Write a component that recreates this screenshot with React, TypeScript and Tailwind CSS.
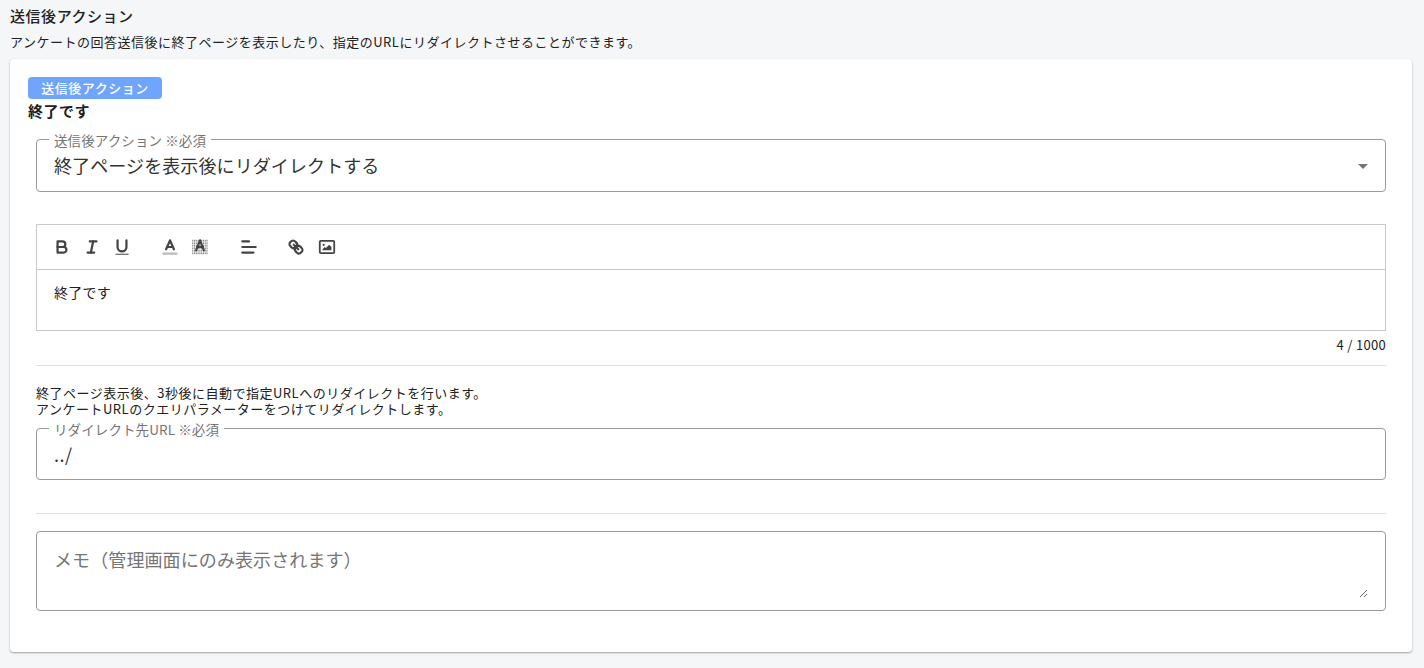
const FONT = "font-['Noto_Sans_CJK_JP','Noto_Sans',sans-serif]";

function ToolIcon({ children }: { children: React.ReactNode }) {
  return (
    <button className="w-[30px] h-6 flex items-center justify-center">
      <svg viewBox="0 0 18 18" className="w-5 h-5 fill-none stroke-[#444] stroke-2 [stroke-linecap:round] [stroke-linejoin:round]">
        {children}
      </svg>
    </button>
  );
}

function OutlinedField({ label, className, children }: { label: string; className: string; children: React.ReactNode }) {
  return (
    <div className={`relative border border-[#9a9a9a] rounded-[4px] ${className}`}>
      <span className="absolute -top-[9px] left-[12px] bg-white px-[5px] text-[13.5px] leading-[18px] tracking-[0.1px] text-[#757575]">{label}</span>
      {children}
    </div>
  );
}

export default function App() {
  return (
    <div className={`bg-[#f5f6f8] h-[668px] pl-[10px] pr-[12px] pt-[6px] text-[#212121] overflow-hidden ${FONT}`}>
      <h2 className="text-[15px] leading-[20px] tracking-[0.55px] font-medium">送信後アクション</h2>
      <p className="mt-[6px] text-[13px] leading-[20px] tracking-[0.5px]">アンケートの回答送信後に終了ページを表示したり、指定のURLにリダイレクトさせることができます。</p>

      <div className="mt-[7px] h-[593px] bg-white rounded-[4px] shadow-[0_1px_2px_rgba(0,0,0,0.35)] pt-[18px] px-[18px]">
        <div className="w-[134px] h-[22px] bg-[#70a5ff] rounded-[4px] text-white text-[13px] tracking-[0.5px] font-medium leading-[22px] text-center">送信後アクション</div>
        <div className="text-[15px] leading-[24px] tracking-[0.5px] font-bold">終了です</div>

        <div className="px-2 mt-[16px]">
          <OutlinedField label="送信後アクション ※必須" className="h-[53px] flex items-center justify-between pl-[17px] pr-[17px]">
            <span className="text-[18px] leading-[24px] tracking-[0.1px] text-[#333] mt-[-1px]">終了ページを表示後にリダイレクトする</span>
            <span className="w-0 h-0 border-x-[5.5px] border-x-transparent border-t-[5.5px] border-t-[#757575] mt-[1px]" />
          </OutlinedField>

          {/* Editor */}
          <div className="mt-[32px] border border-[#c8c8c8]">
            <div className="h-[45px] border-b border-[#c8c8c8] flex items-center pl-[10px]">
              <ToolIcon>
                <path d="M5,4H9.5A2.5,2.5,0,0,1,12,6.5v0A2.5,2.5,0,0,1,9.5,9H5A0,0,0,0,1,5,9V4A0,0,0,0,1,5,4Z" />
                <path d="M5,9h5.5A2.5,2.5,0,0,1,13,11.5v0A2.5,2.5,0,0,1,10.5,14H5a0,0,0,0,1,0,0V9A0,0,0,0,1,5,9Z" />
              </ToolIcon>
              <ToolIcon>
                <line x1="7" x2="13" y1="4" y2="4" />
                <line x1="5" x2="11" y1="14" y2="14" />
                <line x1="8" x2="10" y1="14" y2="4" />
              </ToolIcon>
              <ToolIcon>
                <path d="M5,3V9a4.012,4.012,0,0,0,4,4H9a4.012,4.012,0,0,0,4-4V3" />
                <rect x="3" y="15" width="12" height="1" rx="0.5" ry="0.5" className="fill-[#444] stroke-none" />
              </ToolIcon>
              <div className="w-[18px]" />
              <ToolIcon>
                <line x1="3" x2="15" y1="15" y2="15" className="stroke-[#bbb]" />
                <polyline points="5.5 11 9 3 12.5 11" />
                <line x1="11.63" x2="6.38" y1="9" y2="9" />
              </ToolIcon>
              <ToolIcon>
                <path
                  className="stroke-[#444] stroke-[0.7] [stroke-linecap:butt]"
                  strokeDasharray="1 0.6"
                  d="M2 3h14M2 4.5h14M2 6h14M2 7.5h14M2 9h14M2 10.5h14M2 12h14M2 13.5h14M2 15h14"
                />
                <polyline points="5.5 12 9 3 12.5 12" />
                <line x1="11.63" x2="6.38" y1="9" y2="9" />
              </ToolIcon>
              <div className="w-[19px]" />
              <ToolIcon>
                <line x1="3" x2="15" y1="9" y2="9" />
                <line x1="3" x2="13" y1="14" y2="14" />
                <line x1="3" x2="9" y1="4" y2="4" />
              </ToolIcon>
              <div className="w-[17px]" />
              <ToolIcon>
                <line x1="7" x2="11" y1="7" y2="11" />
                <path d="M8.9,4.577a3.476,3.476,0,0,1,.36,4.679A3.476,3.476,0,0,1,4.577,8.9C3.185,7.5,2.035,6.4,4.217,4.217S7.5,3.185,8.9,4.577Z" />
                <path d="M13.423,9.1a3.476,3.476,0,0,0-4.679-.36,3.476,3.476,0,0,0,.36,4.679c1.392,1.392,2.5,2.542,4.679.36S14.815,10.5,13.423,9.1Z" />
              </ToolIcon>
              <div className="w-px" />
              <ToolIcon>
                <rect x="2.5" y="3.5" width="13" height="11" rx="1" ry="1" className="stroke-[1.6]" />
                <circle cx="6" cy="7" r="1" className="fill-[#444] stroke-none" />
                <polyline points="5 12 5 11 7 9 8 10 11 7 13 9 13 12 5 12" className="fill-[#444] stroke-none" />
              </ToolIcon>
            </div>
            <div className="h-[60px] pl-[17px] pt-[12px] text-[14px] leading-[20px] tracking-[0.25px]">終了です</div>
          </div>
          <div className="text-right text-[13px] leading-[18px] tracking-[0.3px] mt-[5px]">4 / 1000</div>

          <div className="mt-[11px] border-t border-[#e0e0e0]" />
          <p className="mt-[19px] text-[13px] leading-[16px] tracking-[0.5px]">
            終了ページ表示後、3秒後に自動で指定URLへのリダイレクトを行います。
            <br />
            アンケートURLのクエリパラメーターをつけてリダイレクトします。
          </p>

          <OutlinedField label="リダイレクト先URL ※必須" className="mt-[11px] h-[52px] flex items-center pl-[17px]">
            <span className="text-[18px] leading-[24px] tracking-[0.5px] text-[#333]">../</span>
          </OutlinedField>

          <div className="mt-[33px] border-t border-[#e0e0e0]" />

          <div className="mt-[17px] h-[80px] border border-[#9a9a9a] rounded-[4px] pl-[17px] pr-[17px] pt-[12px] pb-[12px]">
            <textarea
              className="block w-full h-full resize-y outline-none text-[18px] leading-[30px] tracking-[0.1px] placeholder:text-[#757575]"
              placeholder="メモ（管理画面にのみ表示されます）"
            />
          </div>
        </div>
      </div>
    </div>
  );
}
